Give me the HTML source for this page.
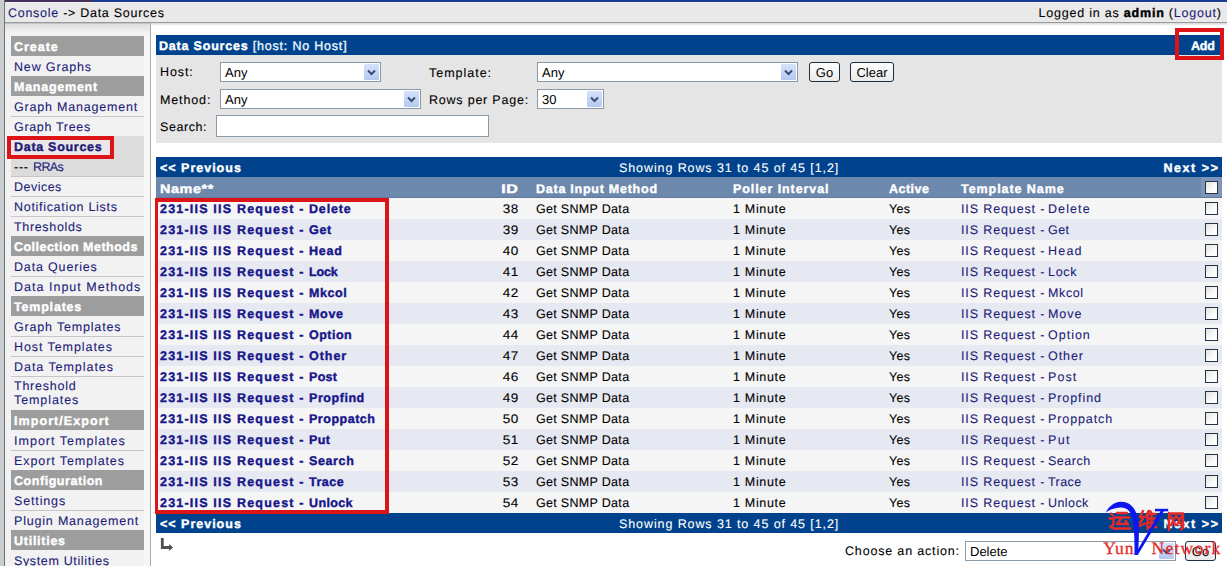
<!DOCTYPE html><html><head><meta charset='utf-8'><style>
*{margin:0;padding:0;box-sizing:border-box}
html,body{width:1227px;height:566px;overflow:hidden;background:#fff}
body{position:relative;text-rendering:geometricPrecision;font-family:"Liberation Sans",sans-serif;font-size:12.5px;color:#000}
.a{position:absolute}
.t{position:absolute;white-space:pre;line-height:14px;font-size:12.5px;-webkit-text-stroke:0.1px currentColor}
.b{font-weight:bold;font-size:12.5px;-webkit-text-stroke:0.4px currentColor}
b{-webkit-text-stroke:0.4px currentColor}
.lk{color:#1c1c78}
.nm{color:#16168a}
.w{color:#fff}
.sel{position:absolute;background:#fff;border:1px solid #8a9aa8}
.sel .btn{position:absolute;top:1px;right:1px;width:15px;bottom:1px;background:linear-gradient(#d6e2fa,#b4c8f0);border-radius:1px}
.sel .btn svg{position:absolute;left:3px;top:5px}
.sel .v{position:absolute;left:4px;top:3px;font-size:13px;line-height:14px;white-space:pre}
.inp{position:absolute;background:#fff;border:1px solid #8a9aa8}
.gb{position:absolute;border:1px solid #1e2e44;border-radius:3px;background:linear-gradient(#fdfdfd,#eaeaea);font-size:13px;line-height:19px;text-align:center;color:#000}
.cb{position:absolute;width:13px;height:13px;border:1px solid #243446;background:linear-gradient(135deg,#e2e2dc,#fafafa 60%,#fff)}
</style></head><body>
<div class='a' style='left:0px;top:0px;width:4px;height:566px;background:#c9cdcf;'></div>
<div class='a' style='left:4px;top:0px;width:1px;height:566px;background:#6c737a;'></div>
<div class='a' style='left:5px;top:0px;width:1222px;height:2px;background:#183c8f;'></div>
<div class='a' style='left:5px;top:0px;width:88px;height:2px;background:#48305e;'></div>
<div class='a' style='left:5px;top:2px;width:1222px;height:20px;background:#e9e9e9;'></div>
<div class='a' style='left:5px;top:2px;width:1222px;height:1px;background:#f4eef6;'></div>
<div class='a' style='left:5px;top:22px;width:1222px;height:1px;background:#9a9a9a;'></div>
<div class='a' style='left:5px;top:23px;width:1222px;height:1px;background:#c4c4c4;'></div>
<div class='a' style='left:5px;top:24px;width:1222px;height:1px;background:#dedede;'></div>
<div class='a' style='left:5px;top:25px;width:145px;height:541px;background:#f2f2f2;'></div>
<div class='a' style='left:144px;top:25px;width:6px;height:541px;background:#f6f6f6;'></div>
<div class='a' style='left:5px;top:25px;width:145px;height:8px;background:linear-gradient(#e0e0e0,#f2f2f2);'></div>
<div class='a' style='left:150px;top:22px;width:1px;height:544px;background:#aaaaaa;'></div>
<div class='a' style='left:151px;top:23px;width:1076px;height:3px;background:linear-gradient(#d8d8d8,#fff);'></div>
<div class='t ' style='top:5.60px;left:8px;letter-spacing:0.724px;'><span class='lk'>Console</span> -&gt; Data Sources</div>
<div class='t ' style='top:5.60px;right:5.21px;letter-spacing:0.794px;'>Logged in as <b>admin</b> (<span class='lk'>Logout</span>)</div>
<div class='a' style='left:11px;top:36px;width:133px;height:20px;background:#9d9d9d;'></div>
<div class='t b w' style='top:39.50px;left:14px;letter-spacing:0.964px;'>Create</div>
<div class='t lk' style='top:59.50px;left:14px;letter-spacing:0.842px;'>New Graphs</div>
<div class='a' style='left:11px;top:76px;width:133px;height:20px;background:#9d9d9d;'></div>
<div class='t b w' style='top:79.50px;left:14px;letter-spacing:0.748px;'>Management</div>
<div class='t lk' style='top:99.50px;left:14px;letter-spacing:0.800px;'>Graph Management</div>
<div class='a' style='left:11px;top:116px;width:133px;height:1px;background:#c6c6c6;'></div>
<div class='t lk' style='top:119.50px;left:14px;letter-spacing:0.672px;'>Graph Trees</div>
<div class='a' style='left:11px;top:136px;width:133px;height:1px;background:#c6c6c6;'></div>
<div class='a' style='left:11px;top:136px;width:133px;height:20px;background:#dcdcdc;'></div>
<div class='a' style='left:11px;top:140px;width:99px;height:15px;background:#ede7e9;'></div>
<div class='t lk b' style='top:139.50px;left:14px;letter-spacing:0.708px;'>Data Sources</div>
<div class='a' style='left:11px;top:156px;width:133px;height:1px;background:#c6c6c6;'></div>
<div class='a' style='left:11px;top:156px;width:133px;height:20px;background:#dcdcdc;'></div>
<div class='t ' style='top:159.50px;left:14px;letter-spacing:0.720px;'>---</div>
<div class='t lk' style='top:159.50px;left:33px;letter-spacing:-0.643px;'>RRAs</div>
<div class='a' style='left:11px;top:176px;width:133px;height:1px;background:#c6c6c6;'></div>
<div class='t lk' style='top:179.50px;left:14px;letter-spacing:0.474px;'>Devices</div>
<div class='a' style='left:11px;top:196px;width:133px;height:1px;background:#c6c6c6;'></div>
<div class='t lk' style='top:199.50px;left:14px;letter-spacing:0.699px;'>Notification Lists</div>
<div class='a' style='left:11px;top:216px;width:133px;height:1px;background:#c6c6c6;'></div>
<div class='t lk' style='top:219.50px;left:14px;letter-spacing:0.664px;'>Thresholds</div>
<div class='a' style='left:11px;top:236px;width:133px;height:20px;background:#9d9d9d;'></div>
<div class='t b w' style='top:239.50px;left:14px;letter-spacing:0.475px;'>Collection Methods</div>
<div class='t lk' style='top:259.50px;left:14px;letter-spacing:0.832px;'>Data Queries</div>
<div class='a' style='left:11px;top:276px;width:133px;height:1px;background:#c6c6c6;'></div>
<div class='t lk' style='top:279.50px;left:14px;letter-spacing:1.013px;'>Data Input Methods</div>
<div class='a' style='left:11px;top:296px;width:133px;height:20px;background:#9d9d9d;'></div>
<div class='t b w' style='top:299.50px;left:14px;letter-spacing:0.800px;'>Templates</div>
<div class='t lk' style='top:319.50px;left:14px;letter-spacing:0.821px;'>Graph Templates</div>
<div class='a' style='left:11px;top:336px;width:133px;height:1px;background:#c6c6c6;'></div>
<div class='t lk' style='top:339.50px;left:14px;letter-spacing:0.923px;'>Host Templates</div>
<div class='a' style='left:11px;top:356px;width:133px;height:1px;background:#c6c6c6;'></div>
<div class='t lk' style='top:359.50px;left:14px;letter-spacing:0.951px;'>Data Templates</div>
<div class='a' style='left:11px;top:376px;width:133px;height:1px;background:#c6c6c6;'></div>
<div class='t lk' style='top:378.70px;left:14px;letter-spacing:0.760px;'>Threshold</div>
<div class='t lk' style='top:392.70px;left:14px;letter-spacing:0.920px;'>Templates</div>
<div class='a' style='left:11px;top:410px;width:133px;height:20px;background:#9d9d9d;'></div>
<div class='t b w' style='top:413.50px;left:14px;letter-spacing:1.070px;'>Import/Export</div>
<div class='t lk' style='top:433.50px;left:14px;letter-spacing:1.013px;'>Import Templates</div>
<div class='a' style='left:11px;top:450px;width:133px;height:1px;background:#c6c6c6;'></div>
<div class='t lk' style='top:453.50px;left:14px;letter-spacing:0.909px;'>Export Templates</div>
<div class='a' style='left:11px;top:470px;width:133px;height:20px;background:#9d9d9d;'></div>
<div class='t b w' style='top:473.50px;left:14px;letter-spacing:0.547px;'>Configuration</div>
<div class='t lk' style='top:493.50px;left:14px;letter-spacing:0.852px;'>Settings</div>
<div class='a' style='left:11px;top:510px;width:133px;height:1px;background:#c6c6c6;'></div>
<div class='t lk' style='top:513.50px;left:14px;letter-spacing:0.810px;'>Plugin Management</div>
<div class='a' style='left:11px;top:530px;width:133px;height:20px;background:#9d9d9d;'></div>
<div class='t b w' style='top:533.50px;left:14px;letter-spacing:0.740px;'>Utilities</div>
<div class='t lk' style='top:553.50px;left:14px;letter-spacing:0.640px;'>System Utilities</div>
<div class='a' style='left:156px;top:35px;width:1066px;height:20px;background:#00438c;'></div>
<div class='t w' style='top:38.60px;left:159px;letter-spacing:0.798px;'><b>Data Sources</b> <span style='color:#e8f6ff;-webkit-text-stroke:0.35px #e8f6ff'>[host: No Host]</span></div>
<div class='t b w' style='top:38.60px;right:12.12px;letter-spacing:-0.120px;'>Add</div>
<div class='a' style='left:156px;top:55px;width:1066px;height:88px;background:#e5e5e5;'></div>
<div class='t ' style='top:65.30px;left:160px;letter-spacing:0.900px;'>Host:</div>
<div class='sel' style='left:220px;top:62px;width:161px;height:20px'><div class='v'>Any</div><div class='btn'><svg width='9' height='7' viewBox='0 0 9 7'><path d='M1 1.5 L4.5 5 L8 1.5' stroke='#3a4c78' stroke-width='2' fill='none'/></svg></div></div>
<div class='t ' style='top:65.70px;left:429px;letter-spacing:0.980px;'>Template:</div>
<div class='sel' style='left:537px;top:62px;width:261px;height:20px'><div class='v'>Any</div><div class='btn'><svg width='9' height='7' viewBox='0 0 9 7'><path d='M1 1.5 L4.5 5 L8 1.5' stroke='#3a4c78' stroke-width='2' fill='none'/></svg></div></div>
<div class='gb' style='left:809px;top:62px;width:31px;height:20px'>Go</div>
<div class='gb' style='left:850px;top:62px;width:44px;height:20px'>Clear</div>
<div class='t ' style='top:92.60px;left:160px;letter-spacing:0.867px;'>Method:</div>
<div class='sel' style='left:220px;top:89px;width:201px;height:20px'><div class='v'>Any</div><div class='btn'><svg width='9' height='7' viewBox='0 0 9 7'><path d='M1 1.5 L4.5 5 L8 1.5' stroke='#3a4c78' stroke-width='2' fill='none'/></svg></div></div>
<div class='t ' style='top:92.60px;left:429px;letter-spacing:0.783px;'>Rows per Page:</div>
<div class='sel' style='left:537px;top:89px;width:67px;height:20px'><div class='v'>30</div><div class='btn'><svg width='9' height='7' viewBox='0 0 9 7'><path d='M1 1.5 L4.5 5 L8 1.5' stroke='#3a4c78' stroke-width='2' fill='none'/></svg></div></div>
<div class='t ' style='top:119.60px;left:160px;letter-spacing:0.559px;'>Search:</div>
<div class='inp' style='left:216px;top:115px;width:273px;height:22px'></div>
<div class='a' style='left:156px;top:157px;width:1066px;height:20px;background:#00438c;'></div>
<div class='t b w' style='top:160.70px;left:160px;letter-spacing:0.996px;'>&lt;&lt; Previous</div>
<div class='t w' style='top:160.70px;left:619px;letter-spacing:0.902px;'>Showing Rows 31 to 45 of 45 [1,2]</div>
<div class='t b w' style='top:160.70px;right:7.43px;letter-spacing:1.566px;'>Next &gt;&gt;</div>
<div class='a' style='left:156px;top:177px;width:1066px;height:21px;background:#6d88ad;'></div>
<div class='a' style='left:1201px;top:177px;width:21px;height:21px;background:#7c95b8;'></div>
<div class='a' style='left:156px;top:197px;width:1066px;height:1px;background:#627a9e;'></div>
<div class='t b w' style='top:181.70px;left:160px;letter-spacing:0.500px;transform:scaleX(1.152);transform-origin:left center;'>Name**</div>
<div class='t b w' style='top:181.70px;left:536px;letter-spacing:0.750px;'>Data Input Method</div>
<div class='t b w' style='top:181.70px;left:733px;letter-spacing:0.921px;'>Poller Interval</div>
<div class='t b w' style='top:181.70px;left:889px;letter-spacing:0.484px;'>Active</div>
<div class='t b w' style='top:181.70px;left:961px;letter-spacing:0.930px;'>Template Name</div>
<div class='t b w' style='top:181.70px;right:708.50px;letter-spacing:0.500px;transform:scaleX(1.283);transform-origin:right center;'>ID</div>
<div class='cb' style='left:1205px;top:181px'></div>
<div class='a' style='left:156px;top:198px;width:1066px;height:21px;background:#f5f5f5;'></div>
<div class='t nm b' style='top:201.60px;left:160px;letter-spacing:1.200px;'>231-IIS IIS Request -</div>
<div class='t nm b' style='top:201.60px;left:309px;letter-spacing:0.840px;'>Delete</div>
<div class='t ' style='top:201.60px;right:708.60px;letter-spacing:0.400px;transform:scaleX(1.084);transform-origin:right center;'>38</div>
<div class='t ' style='top:201.60px;left:536px;letter-spacing:0.308px;'>Get SNMP Data</div>
<div class='t ' style='top:201.60px;left:733px;letter-spacing:0.682px;'>1 Minute</div>
<div class='t ' style='top:201.60px;left:889px;letter-spacing:0.260px;'>Yes</div>
<div class='t lk' style='top:201.60px;left:961px;letter-spacing:0.876px;'>IIS Request -</div>
<div class='t lk' style='top:201.60px;left:1048px;letter-spacing:1.092px;'>Delete</div>
<div class='cb' style='left:1205px;top:202px'></div>
<div class='a' style='left:156px;top:219px;width:1066px;height:21px;background:#e7e9f2;'></div>
<div class='t nm b' style='top:222.60px;left:160px;letter-spacing:1.200px;'>231-IIS IIS Request -</div>
<div class='t nm b' style='top:222.60px;left:309px;letter-spacing:0.680px;'>Get</div>
<div class='t ' style='top:222.60px;right:708.60px;letter-spacing:0.400px;transform:scaleX(1.084);transform-origin:right center;'>39</div>
<div class='t ' style='top:222.60px;left:536px;letter-spacing:0.308px;'>Get SNMP Data</div>
<div class='t ' style='top:222.60px;left:733px;letter-spacing:0.682px;'>1 Minute</div>
<div class='t ' style='top:222.60px;left:889px;letter-spacing:0.260px;'>Yes</div>
<div class='t lk' style='top:222.60px;left:961px;letter-spacing:0.876px;'>IIS Request -</div>
<div class='t lk' style='top:222.60px;left:1048px;letter-spacing:0.420px;'>Get</div>
<div class='cb' style='left:1205px;top:223px'></div>
<div class='a' style='left:156px;top:240px;width:1066px;height:21px;background:#f5f5f5;'></div>
<div class='t nm b' style='top:243.60px;left:160px;letter-spacing:1.200px;'>231-IIS IIS Request -</div>
<div class='t nm b' style='top:243.60px;left:309px;letter-spacing:0.796px;'>Head</div>
<div class='t ' style='top:243.60px;right:708.60px;letter-spacing:0.400px;transform:scaleX(1.084);transform-origin:right center;'>40</div>
<div class='t ' style='top:243.60px;left:536px;letter-spacing:0.308px;'>Get SNMP Data</div>
<div class='t ' style='top:243.60px;left:733px;letter-spacing:0.682px;'>1 Minute</div>
<div class='t ' style='top:243.60px;left:889px;letter-spacing:0.260px;'>Yes</div>
<div class='t lk' style='top:243.60px;left:961px;letter-spacing:0.876px;'>IIS Request -</div>
<div class='t lk' style='top:243.60px;left:1048px;letter-spacing:1.215px;'>Head</div>
<div class='cb' style='left:1205px;top:244px'></div>
<div class='a' style='left:156px;top:261px;width:1066px;height:21px;background:#e7e9f2;'></div>
<div class='t nm b' style='top:264.60px;left:160px;letter-spacing:1.200px;'>231-IIS IIS Request -</div>
<div class='t nm b' style='top:264.60px;left:309px;letter-spacing:-0.167px;'>Lock</div>
<div class='t ' style='top:264.60px;right:708.60px;letter-spacing:0.400px;transform:scaleX(1.084);transform-origin:right center;'>41</div>
<div class='t ' style='top:264.60px;left:536px;letter-spacing:0.308px;'>Get SNMP Data</div>
<div class='t ' style='top:264.60px;left:733px;letter-spacing:0.682px;'>1 Minute</div>
<div class='t ' style='top:264.60px;left:889px;letter-spacing:0.260px;'>Yes</div>
<div class='t lk' style='top:264.60px;left:961px;letter-spacing:0.876px;'>IIS Request -</div>
<div class='t lk' style='top:264.60px;left:1048px;letter-spacing:0.681px;'>Lock</div>
<div class='cb' style='left:1205px;top:265px'></div>
<div class='a' style='left:156px;top:282px;width:1066px;height:21px;background:#f5f5f5;'></div>
<div class='t nm b' style='top:285.60px;left:160px;letter-spacing:1.200px;'>231-IIS IIS Request -</div>
<div class='t nm b' style='top:285.60px;left:309px;letter-spacing:0.560px;'>Mkcol</div>
<div class='t ' style='top:285.60px;right:708.60px;letter-spacing:0.400px;transform:scaleX(1.084);transform-origin:right center;'>42</div>
<div class='t ' style='top:285.60px;left:536px;letter-spacing:0.308px;'>Get SNMP Data</div>
<div class='t ' style='top:285.60px;left:733px;letter-spacing:0.682px;'>1 Minute</div>
<div class='t ' style='top:285.60px;left:889px;letter-spacing:0.260px;'>Yes</div>
<div class='t lk' style='top:285.60px;left:961px;letter-spacing:0.876px;'>IIS Request -</div>
<div class='t lk' style='top:285.60px;left:1048px;letter-spacing:0.620px;'>Mkcol</div>
<div class='cb' style='left:1205px;top:286px'></div>
<div class='a' style='left:156px;top:303px;width:1066px;height:21px;background:#e7e9f2;'></div>
<div class='t nm b' style='top:306.60px;left:160px;letter-spacing:1.200px;'>231-IIS IIS Request -</div>
<div class='t nm b' style='top:306.60px;left:309px;letter-spacing:0.686px;'>Move</div>
<div class='t ' style='top:306.60px;right:708.60px;letter-spacing:0.400px;transform:scaleX(1.084);transform-origin:right center;'>43</div>
<div class='t ' style='top:306.60px;left:536px;letter-spacing:0.308px;'>Get SNMP Data</div>
<div class='t ' style='top:306.60px;left:733px;letter-spacing:0.682px;'>1 Minute</div>
<div class='t ' style='top:306.60px;left:889px;letter-spacing:0.260px;'>Yes</div>
<div class='t lk' style='top:306.60px;left:961px;letter-spacing:0.876px;'>IIS Request -</div>
<div class='t lk' style='top:306.60px;left:1048px;letter-spacing:0.948px;'>Move</div>
<div class='cb' style='left:1205px;top:307px'></div>
<div class='a' style='left:156px;top:324px;width:1066px;height:21px;background:#f5f5f5;'></div>
<div class='t nm b' style='top:327.60px;left:160px;letter-spacing:1.200px;'>231-IIS IIS Request -</div>
<div class='t nm b' style='top:327.60px;left:309px;letter-spacing:0.488px;'>Option</div>
<div class='t ' style='top:327.60px;right:708.60px;letter-spacing:0.400px;transform:scaleX(1.084);transform-origin:right center;'>44</div>
<div class='t ' style='top:327.60px;left:536px;letter-spacing:0.308px;'>Get SNMP Data</div>
<div class='t ' style='top:327.60px;left:733px;letter-spacing:0.682px;'>1 Minute</div>
<div class='t ' style='top:327.60px;left:889px;letter-spacing:0.260px;'>Yes</div>
<div class='t lk' style='top:327.60px;left:961px;letter-spacing:0.876px;'>IIS Request -</div>
<div class='t lk' style='top:327.60px;left:1048px;letter-spacing:0.996px;'>Option</div>
<div class='cb' style='left:1205px;top:328px'></div>
<div class='a' style='left:156px;top:345px;width:1066px;height:21px;background:#e7e9f2;'></div>
<div class='t nm b' style='top:348.60px;left:160px;letter-spacing:1.200px;'>231-IIS IIS Request -</div>
<div class='t nm b' style='top:348.60px;left:309px;letter-spacing:0.960px;'>Other</div>
<div class='t ' style='top:348.60px;right:708.60px;letter-spacing:0.400px;transform:scaleX(1.084);transform-origin:right center;'>47</div>
<div class='t ' style='top:348.60px;left:536px;letter-spacing:0.308px;'>Get SNMP Data</div>
<div class='t ' style='top:348.60px;left:733px;letter-spacing:0.682px;'>1 Minute</div>
<div class='t ' style='top:348.60px;left:889px;letter-spacing:0.260px;'>Yes</div>
<div class='t lk' style='top:348.60px;left:961px;letter-spacing:0.876px;'>IIS Request -</div>
<div class='t lk' style='top:348.60px;left:1048px;letter-spacing:0.940px;'>Other</div>
<div class='cb' style='left:1205px;top:349px'></div>
<div class='a' style='left:156px;top:366px;width:1066px;height:21px;background:#f5f5f5;'></div>
<div class='t nm b' style='top:369.60px;left:160px;letter-spacing:1.200px;'>231-IIS IIS Request -</div>
<div class='t nm b' style='top:369.60px;left:309px;letter-spacing:0.310px;'>Post</div>
<div class='t ' style='top:369.60px;right:708.60px;letter-spacing:0.400px;transform:scaleX(1.084);transform-origin:right center;'>46</div>
<div class='t ' style='top:369.60px;left:536px;letter-spacing:0.308px;'>Get SNMP Data</div>
<div class='t ' style='top:369.60px;left:733px;letter-spacing:0.682px;'>1 Minute</div>
<div class='t ' style='top:369.60px;left:889px;letter-spacing:0.260px;'>Yes</div>
<div class='t lk' style='top:369.60px;left:961px;letter-spacing:0.876px;'>IIS Request -</div>
<div class='t lk' style='top:369.60px;left:1048px;letter-spacing:1.066px;'>Post</div>
<div class='cb' style='left:1205px;top:370px'></div>
<div class='a' style='left:156px;top:387px;width:1066px;height:21px;background:#e7e9f2;'></div>
<div class='t nm b' style='top:390.60px;left:160px;letter-spacing:1.200px;'>231-IIS IIS Request -</div>
<div class='t nm b' style='top:390.60px;left:309px;letter-spacing:0.554px;'>Propfind</div>
<div class='t ' style='top:390.60px;right:708.60px;letter-spacing:0.400px;transform:scaleX(1.084);transform-origin:right center;'>49</div>
<div class='t ' style='top:390.60px;left:536px;letter-spacing:0.308px;'>Get SNMP Data</div>
<div class='t ' style='top:390.60px;left:733px;letter-spacing:0.682px;'>1 Minute</div>
<div class='t ' style='top:390.60px;left:889px;letter-spacing:0.260px;'>Yes</div>
<div class='t lk' style='top:390.60px;left:961px;letter-spacing:0.876px;'>IIS Request -</div>
<div class='t lk' style='top:390.60px;left:1048px;letter-spacing:0.923px;'>Propfind</div>
<div class='cb' style='left:1205px;top:391px'></div>
<div class='a' style='left:156px;top:408px;width:1066px;height:21px;background:#f5f5f5;'></div>
<div class='t nm b' style='top:411.60px;left:160px;letter-spacing:1.200px;'>231-IIS IIS Request -</div>
<div class='t nm b' style='top:411.60px;left:309px;letter-spacing:0.520px;'>Proppatch</div>
<div class='t ' style='top:411.60px;right:708.60px;letter-spacing:0.400px;transform:scaleX(1.084);transform-origin:right center;'>50</div>
<div class='t ' style='top:411.60px;left:536px;letter-spacing:0.308px;'>Get SNMP Data</div>
<div class='t ' style='top:411.60px;left:733px;letter-spacing:0.682px;'>1 Minute</div>
<div class='t ' style='top:411.60px;left:889px;letter-spacing:0.260px;'>Yes</div>
<div class='t lk' style='top:411.60px;left:961px;letter-spacing:0.876px;'>IIS Request -</div>
<div class='t lk' style='top:411.60px;left:1048px;letter-spacing:0.900px;'>Proppatch</div>
<div class='cb' style='left:1205px;top:412px'></div>
<div class='a' style='left:156px;top:429px;width:1066px;height:21px;background:#e7e9f2;'></div>
<div class='t nm b' style='top:432.60px;left:160px;letter-spacing:1.200px;'>231-IIS IIS Request -</div>
<div class='t nm b' style='top:432.60px;left:309px;letter-spacing:0.440px;'>Put</div>
<div class='t ' style='top:432.60px;right:708.60px;letter-spacing:0.400px;transform:scaleX(1.084);transform-origin:right center;'>51</div>
<div class='t ' style='top:432.60px;left:536px;letter-spacing:0.308px;'>Get SNMP Data</div>
<div class='t ' style='top:432.60px;left:733px;letter-spacing:0.682px;'>1 Minute</div>
<div class='t ' style='top:432.60px;left:889px;letter-spacing:0.260px;'>Yes</div>
<div class='t lk' style='top:432.60px;left:961px;letter-spacing:0.876px;'>IIS Request -</div>
<div class='t lk' style='top:432.60px;left:1048px;letter-spacing:1.380px;'>Put</div>
<div class='cb' style='left:1205px;top:433px'></div>
<div class='a' style='left:156px;top:450px;width:1066px;height:21px;background:#f5f5f5;'></div>
<div class='t nm b' style='top:453.60px;left:160px;letter-spacing:1.200px;'>231-IIS IIS Request -</div>
<div class='t nm b' style='top:453.60px;left:309px;letter-spacing:0.616px;'>Search</div>
<div class='t ' style='top:453.60px;right:708.60px;letter-spacing:0.400px;transform:scaleX(1.084);transform-origin:right center;'>52</div>
<div class='t ' style='top:453.60px;left:536px;letter-spacing:0.308px;'>Get SNMP Data</div>
<div class='t ' style='top:453.60px;left:733px;letter-spacing:0.682px;'>1 Minute</div>
<div class='t ' style='top:453.60px;left:889px;letter-spacing:0.260px;'>Yes</div>
<div class='t lk' style='top:453.60px;left:961px;letter-spacing:0.876px;'>IIS Request -</div>
<div class='t lk' style='top:453.60px;left:1048px;letter-spacing:0.516px;'>Search</div>
<div class='cb' style='left:1205px;top:454px'></div>
<div class='a' style='left:156px;top:471px;width:1066px;height:21px;background:#e7e9f2;'></div>
<div class='t nm b' style='top:474.60px;left:160px;letter-spacing:1.200px;'>231-IIS IIS Request -</div>
<div class='t nm b' style='top:474.60px;left:309px;letter-spacing:0.520px;'>Trace</div>
<div class='t ' style='top:474.60px;right:708.60px;letter-spacing:0.400px;transform:scaleX(1.084);transform-origin:right center;'>53</div>
<div class='t ' style='top:474.60px;left:536px;letter-spacing:0.308px;'>Get SNMP Data</div>
<div class='t ' style='top:474.60px;left:733px;letter-spacing:0.682px;'>1 Minute</div>
<div class='t ' style='top:474.60px;left:889px;letter-spacing:0.260px;'>Yes</div>
<div class='t lk' style='top:474.60px;left:961px;letter-spacing:0.876px;'>IIS Request -</div>
<div class='t lk' style='top:474.60px;left:1048px;letter-spacing:0.420px;'>Trace</div>
<div class='cb' style='left:1205px;top:475px'></div>
<div class='a' style='left:156px;top:492px;width:1066px;height:21px;background:#f5f5f5;'></div>
<div class='t nm b' style='top:495.60px;left:160px;letter-spacing:1.200px;'>231-IIS IIS Request -</div>
<div class='t nm b' style='top:495.60px;left:309px;letter-spacing:0.360px;'>Unlock</div>
<div class='t ' style='top:495.60px;right:708.60px;letter-spacing:0.400px;transform:scaleX(1.084);transform-origin:right center;'>54</div>
<div class='t ' style='top:495.60px;left:536px;letter-spacing:0.308px;'>Get SNMP Data</div>
<div class='t ' style='top:495.60px;left:733px;letter-spacing:0.682px;'>1 Minute</div>
<div class='t ' style='top:495.60px;left:889px;letter-spacing:0.260px;'>Yes</div>
<div class='t lk' style='top:495.60px;left:961px;letter-spacing:0.876px;'>IIS Request -</div>
<div class='t lk' style='top:495.60px;left:1048px;letter-spacing:0.420px;'>Unlock</div>
<div class='cb' style='left:1205px;top:496px'></div>
<div class='a' style='left:156px;top:513px;width:1066px;height:20px;background:#00438c;'></div>
<div class='t b w' style='top:516.70px;left:160px;letter-spacing:0.996px;'>&lt;&lt; Previous</div>
<div class='t w' style='top:516.70px;left:619px;letter-spacing:0.902px;'>Showing Rows 31 to 45 of 45 [1,2]</div>
<div class='t b w' style='top:516.70px;right:7.43px;letter-spacing:1.566px;'>Next &gt;&gt;</div>
<svg class='a' style='left:155px;top:533px' width='25' height='23' viewBox='155 533 25 23'><path d='M160.9 538.1 H163.7 V546 H169.2 V543.9 L173 547.5 L169.2 551 V548.9 H160.9 Z' fill='#505050'/></svg>
<div class='t ' style='top:544.20px;left:845px;letter-spacing:0.830px;'>Choose an action:</div>
<div class='sel' style='left:965px;top:541px;width:211px;height:20px'><div class='v'>Delete</div><div class='btn'><svg width='9' height='7' viewBox='0 0 9 7'><path d='M1 1.5 L4.5 5 L8 1.5' stroke='#3a4c78' stroke-width='2' fill='none'/></svg></div></div>
<div class='gb' style='left:1185px;top:541px;width:31px;height:20px'>Go</div>
<div class='a' style='left:7px;top:136px;width:107px;height:23px;border:4px solid #dc1418;border-width:4px 4px 4px 4px'></div>
<div class='a' style='left:155px;top:198px;width:234px;height:316px;border:solid #dc1418;border-width:4px 4px 4px 3px'></div>
<div class='a' style='left:1175px;top:28px;width:49px;height:32px;border:4px solid #dc1418'></div>
<svg class='a' style='left:1095px;top:495px' width='132' height='71' viewBox='1095 495 132 71'>
<g stroke='#e52a2a' stroke-width='2.4' fill='none' stroke-linecap='round' stroke-linejoin='round'>
<path d='M1111 513.5 L1113 515.5'/>
<path d='M1109.5 518.5 H1113.5 V524.5 L1110.5 527'/>
<path d='M1110.5 526.5 Q1113 529.5 1119 528.5 H1130'/>
<path d='M1117 513 H1127'/>
<path d='M1115 517.5 H1129'/>
<path d='M1121.5 518 L1117 524 H1126.5'/>
<path d='M1125.5 521 L1128 524.5'/>
<path d='M1143 511 L1140 517 H1144 L1140 523 M1139.5 526 L1145 523.5'/>
<path d='M1148.5 511 L1146 516.5 M1147.5 514.5 V529 M1150 511 L1151.5 513 M1147.5 514 H1155.5 M1151.5 514 V527 M1148 518.5 H1154.5 M1148 522.5 H1154.5 M1147.5 527 H1156'/>
<path d='M1169 513 V530 M1169 513.5 H1183 V528 L1181 529.5'/>
<path d='M1171 516.5 L1175.5 525 M1175.5 516.5 L1171 525 M1177 516.5 L1181.5 525 M1181.5 516.5 L1177 525'/>
</g>
<path d='M1105.8 512.4 C1108.8 506.5 1114 502.4 1120.5 501.8 C1128 501.4 1134.2 506 1137 515 C1139.2 524 1139.4 538 1137.8 555 L1134.4 555 C1134.8 540 1134.2 527 1132.2 518 C1130.2 510.5 1126.5 507.4 1121 507.4 C1115.5 507.4 1110 509.6 1105.8 512.4 Z' fill='#0c16f0'/>
<path d='M1134.6 555 L1161.2 510 L1164.6 510 L1137.8 555 Z' fill='#0c16f0'/>
<rect x='1155' y='508.8' width='13.2' height='2.5' fill='#0c16f0'/>
<text x='1103.2' y='554.3' font-family='Liberation Serif' font-size='17.5' fill='#e52a2a' stroke='#e52a2a' stroke-width='0.3' letter-spacing='1.1'>Yun</text>
<text x='1151.6' y='554.3' font-family='Liberation Serif' font-size='17.5' fill='#e52a2a' stroke='#e52a2a' stroke-width='0.3' letter-spacing='1.25'>Network</text>
</svg>
</body></html>
